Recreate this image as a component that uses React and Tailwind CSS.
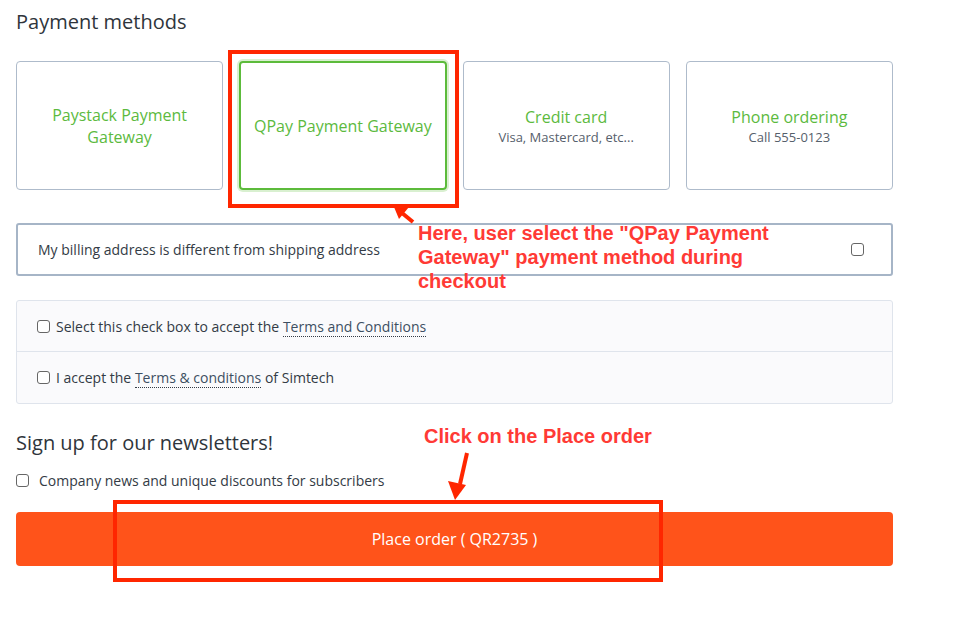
import React from 'react';

const methods = [
  { title: ['Paystack Payment', 'Gateway'], sub: null },
  { title: ['QPay Payment Gateway'], sub: null, selected: true },
  { title: ['Credit card'], sub: 'Visa, Mastercard, etc...' },
  { title: ['Phone ordering'], sub: 'Call 555-0123' },
];

const Box = () => (
  <span className="inline-block w-[13px] h-[13px] shrink-0 rounded-[3px] border border-[#666] bg-white"></span>
);

const App = () => {
  return (
    <div className="relative min-h-[633px] w-[957px] bg-white" style={{ fontFamily: '"Open Sans", sans-serif' }}>
      <div className="w-[909px] px-4 pt-[8px]">
        <h2 className="text-[20px] leading-7 text-[#2f353b]">Payment methods</h2>

        <div className="mt-[25px] grid grid-cols-4 gap-4">
          {methods.map((m, i) => (
            <div
              key={i}
              className={
                m.selected
                  ? 'h-[129px] rounded-[4px] border-2 border-[#5cbb3b] shadow-[0_0_0_2px_#d9f0d0] flex flex-col items-center justify-center text-center'
                  : 'h-[129px] rounded-[4px] border border-[#aebbcb] flex flex-col items-center justify-center text-center'
              }
            >
              {m.title.map((t) => (
                <div key={t} className="text-[16px] leading-[22px] text-[#5cba3e]">{t}</div>
              ))}
              {m.sub && <div className="text-[13px] leading-[18px] text-[#56606b]">{m.sub}</div>}
            </div>
          ))}
        </div>

        <div className="mt-[33px] h-[53px] rounded-[3px] border-2 border-[#a6b5c7] flex items-center justify-between pl-[20px] pr-[27px]">
          <span className="text-[14px] text-[#333b45]">My billing address is different from shipping address</span>
          <Box />
        </div>

        <div className="mt-[24px] rounded-[3px] border border-[#dfe4ec] bg-[#fafafc]">
          <div className="h-[51px] flex items-center gap-[6px] pl-[20px] border-b border-[#dfe4ec]">
            <Box />
            <span className="text-[14px] text-[#333b45]">
              Select this check box to accept the{' '}
              <span className="border-b border-dotted border-[#333b45] text-[#3d4f62]">Terms and Conditions</span>
            </span>
          </div>
          <div className="h-[51px] flex items-center gap-[6px] pl-[20px]">
            <Box />
            <span className="text-[14px] text-[#333b45]">
              I accept the{' '}
              <span className="border-b border-dotted border-[#333b45] text-[#3d4f62]">Terms &amp; conditions</span>{' '}
              of Simtech
            </span>
          </div>
        </div>

        <h2 className="mt-[25px] text-[20px] leading-7 text-[#2f353b]">Sign up for our newsletters!</h2>

        <div className="mt-[13px] flex items-center gap-[10px]">
          <Box />
          <span className="text-[14px] text-[#333b45]">Company news and unique discounts for subscribers</span>
        </div>

        <button className="mt-[21px] h-[54px] w-full rounded-[4px] bg-[#ff531a] text-white text-[16px]">
          Place order ( QR2735 )
        </button>
      </div>

      {/* annotations */}
      <div className="absolute left-[228px] top-[50px] w-[231px] h-[158px] border-4 border-[#ff2600]"></div>
      <div className="absolute left-[113px] top-[500px] w-[550px] h-[82px] border-4 border-[#ff2600]"></div>

      <div
        className="absolute left-[418px] top-[221px] text-[20px] leading-[24px] font-bold text-[#ff3a35]"
        style={{ fontFamily: '"Liberation Sans", Arial, sans-serif' }}
      >
        Here, user select the "QPay Payment
        <br />
        Gateway" payment method during
        <br />
        checkout
      </div>
      <div
        className="absolute left-[424px] top-[424px] text-[20px] leading-[24px] font-bold text-[#ff3a35]"
        style={{ fontFamily: '"Liberation Sans", Arial, sans-serif' }}
      >
        Click on the Place order
      </div>

      <svg className="absolute left-0 top-0 pointer-events-none" width="957" height="633">
        <line x1="413" y1="222" x2="402" y2="213" stroke="#ff2600" strokeWidth="4" />
        <polygon points="394,207 409,207 399,219" fill="#ff2600" />
        <line x1="467" y1="453" x2="460" y2="484" stroke="#ff2600" strokeWidth="4" />
        <polygon points="448,481 466,485 455,500" fill="#ff2600" />
      </svg>
    </div>
  );
};

export default App;
